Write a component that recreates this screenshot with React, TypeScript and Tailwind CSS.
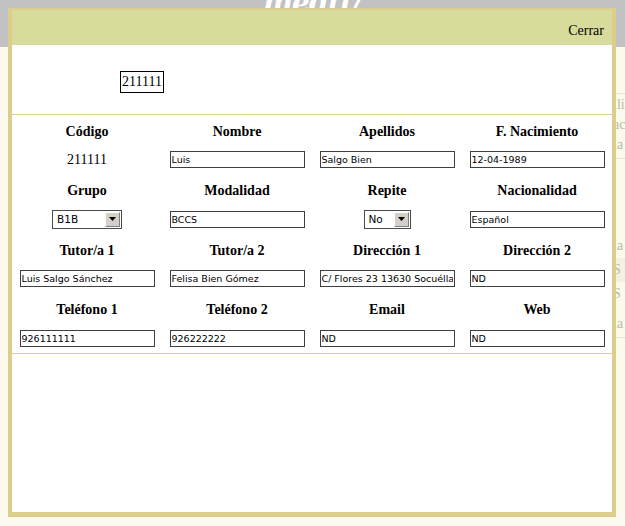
import React from "react";

type Cell =
    | { kind: "text"; value: string }
    | { kind: "input"; value: string }
    | { kind: "select"; value: string; width: string };

interface Row {
    labels: string[];
    cells: Cell[];
}

const rows: Row[] = [
    {
        labels: ["Código", "Nombre", "Apellidos", "F. Nacimiento"],
        cells: [
            { kind: "text", value: "211111" },
            { kind: "input", value: "Luis" },
            { kind: "input", value: "Salgo Bien" },
            { kind: "input", value: "12-04-1989" },
        ],
    },
    {
        labels: ["Grupo", "Modalidad", "Repite", "Nacionalidad"],
        cells: [
            { kind: "select", value: "B1B", width: "w-[70px]" },
            { kind: "input", value: "BCCS" },
            { kind: "select", value: "No", width: "w-[47px]" },
            { kind: "input", value: "Español" },
        ],
    },
    {
        labels: ["Tutor/a 1", "Tutor/a 2", "Dirección 1", "Dirección 2"],
        cells: [
            { kind: "input", value: "Luis Salgo Sánchez" },
            { kind: "input", value: "Felisa Bien Gómez" },
            { kind: "input", value: "C/ Flores 23 13630 Socuéllamos" },
            { kind: "input", value: "ND" },
        ],
    },
    {
        labels: ["Teléfono 1", "Teléfono 2", "Email", "Web"],
        cells: [
            { kind: "input", value: "926111111" },
            { kind: "input", value: "926222222" },
            { kind: "input", value: "ND" },
            { kind: "input", value: "ND" },
        ],
    },
];

// old-style select box with the grey bevelled arrow button
const FakeSelect: React.FC<{ value: string; width: string }> = ({
    value,
    width,
}) => (
    <div
        className={`${width} h-[19px] flex border border-[#4a4a4a] bg-white font-['DejaVu_Sans',sans-serif] text-[10.5px] text-black`}
    >
        <span className="flex-1 flex items-center pl-[4px] leading-none">
            {value}
        </span>
        <span className="w-[15px] m-[1px] flex items-center justify-center bg-[#d4d0c8] border-t border-l border-t-white border-l-white border-b border-r border-b-[#808080] border-r-[#808080]">
            <svg width="7" height="4" viewBox="0 0 7 4">
                <path d="M0 0h7L3.5 4z" fill="#000" />
            </svg>
        </span>
    </div>
);

const renderCell = (cell: Cell) => {
    if (cell.kind === "text") {
        return <span className="text-[14px] text-black">{cell.value}</span>;
    }
    if (cell.kind === "select") {
        return <FakeSelect value={cell.value} width={cell.width} />;
    }
    return (
        <input
            readOnly
            value={cell.value}
            className="w-[135px] h-[17px] border border-[#3f3f3f] bg-white px-[1px] font-['DejaVu_Sans',sans-serif] text-[9.5px] text-black outline-none"
        />
    );
};

export default function App() {
    return (
        <div className="relative w-[625px] h-[526px] overflow-hidden bg-[#fcfaee] font-['Liberation_Serif',serif]">
            {/* page header behind the dialog */}
            <div className="h-[47px] bg-[#c2c2c2] flex justify-center overflow-hidden">
                <span className="-mt-[11px] h-[28px] leading-[28px] text-[28px] italic font-bold text-white font-['DejaVu_Serif',serif] tracking-tight">
                    medtt/
                </span>
            </div>

            {/* bits of the page table peeking out on the right */}
            <div className="ml-[613px] w-[40px] text-[14px] text-[#bcb7a5]">
                <div className="mt-[46px] border-t border-[#ebe7d8] pt-[1px] leading-[20px]">
                    <div>lli</div>
                    <div>ac</div>
                    <div>la</div>
                </div>
                <div className="mt-[3px] border-t border-[#ebe7d8] h-[76px]" />
                <div className="leading-[24px]">
                    <div className="h-[24px]">la</div>
                    <div className="h-[24px] bg-[#f4f1e4]">S</div>
                    <div className="h-[22px]">S</div>
                    <div className="h-[34px] pt-[8px] border-b border-[#ebe7d8]">la</div>
                </div>
            </div>

            {/* dialog */}
            <div className="absolute left-[8px] top-[8px] w-[608px] h-[509px] flex flex-col bg-white border-[#dccf8c] border-x-4 border-t-2 border-b-[5px]">
                <div className="h-[35px] shrink-0 bg-[#d7db9b] flex items-center justify-end pr-[8px] pt-[5px]">
                    <span className="text-[14px] text-black">Cerrar</span>
                </div>

                <div className="h-[69px] shrink-0 pl-[108px] pt-[24px]">
                    <span className="inline-block border border-black px-[1px] leading-[20px] text-[14px] text-black">
                        211111
                    </span>
                </div>

                <div className="border-y border-[#d8ce96] grid grid-cols-[repeat(4,150px)]">
                    {rows.map((row, r) => (
                        <React.Fragment key={r}>
                            {row.labels.map((label) => (
                                <div
                                    key={label}
                                    className="h-[29.75px] pt-[3px] flex items-center justify-center text-[14px] font-bold text-black"
                                >
                                    {label}
                                </div>
                            ))}
                            {row.cells.map((cell, c) => (
                                <div
                                    key={c}
                                    className="h-[29.75px] flex items-center justify-center"
                                >
                                    {renderCell(cell)}
                                </div>
                            ))}
                        </React.Fragment>
                    ))}
                </div>
            </div>
        </div>
    );
}
